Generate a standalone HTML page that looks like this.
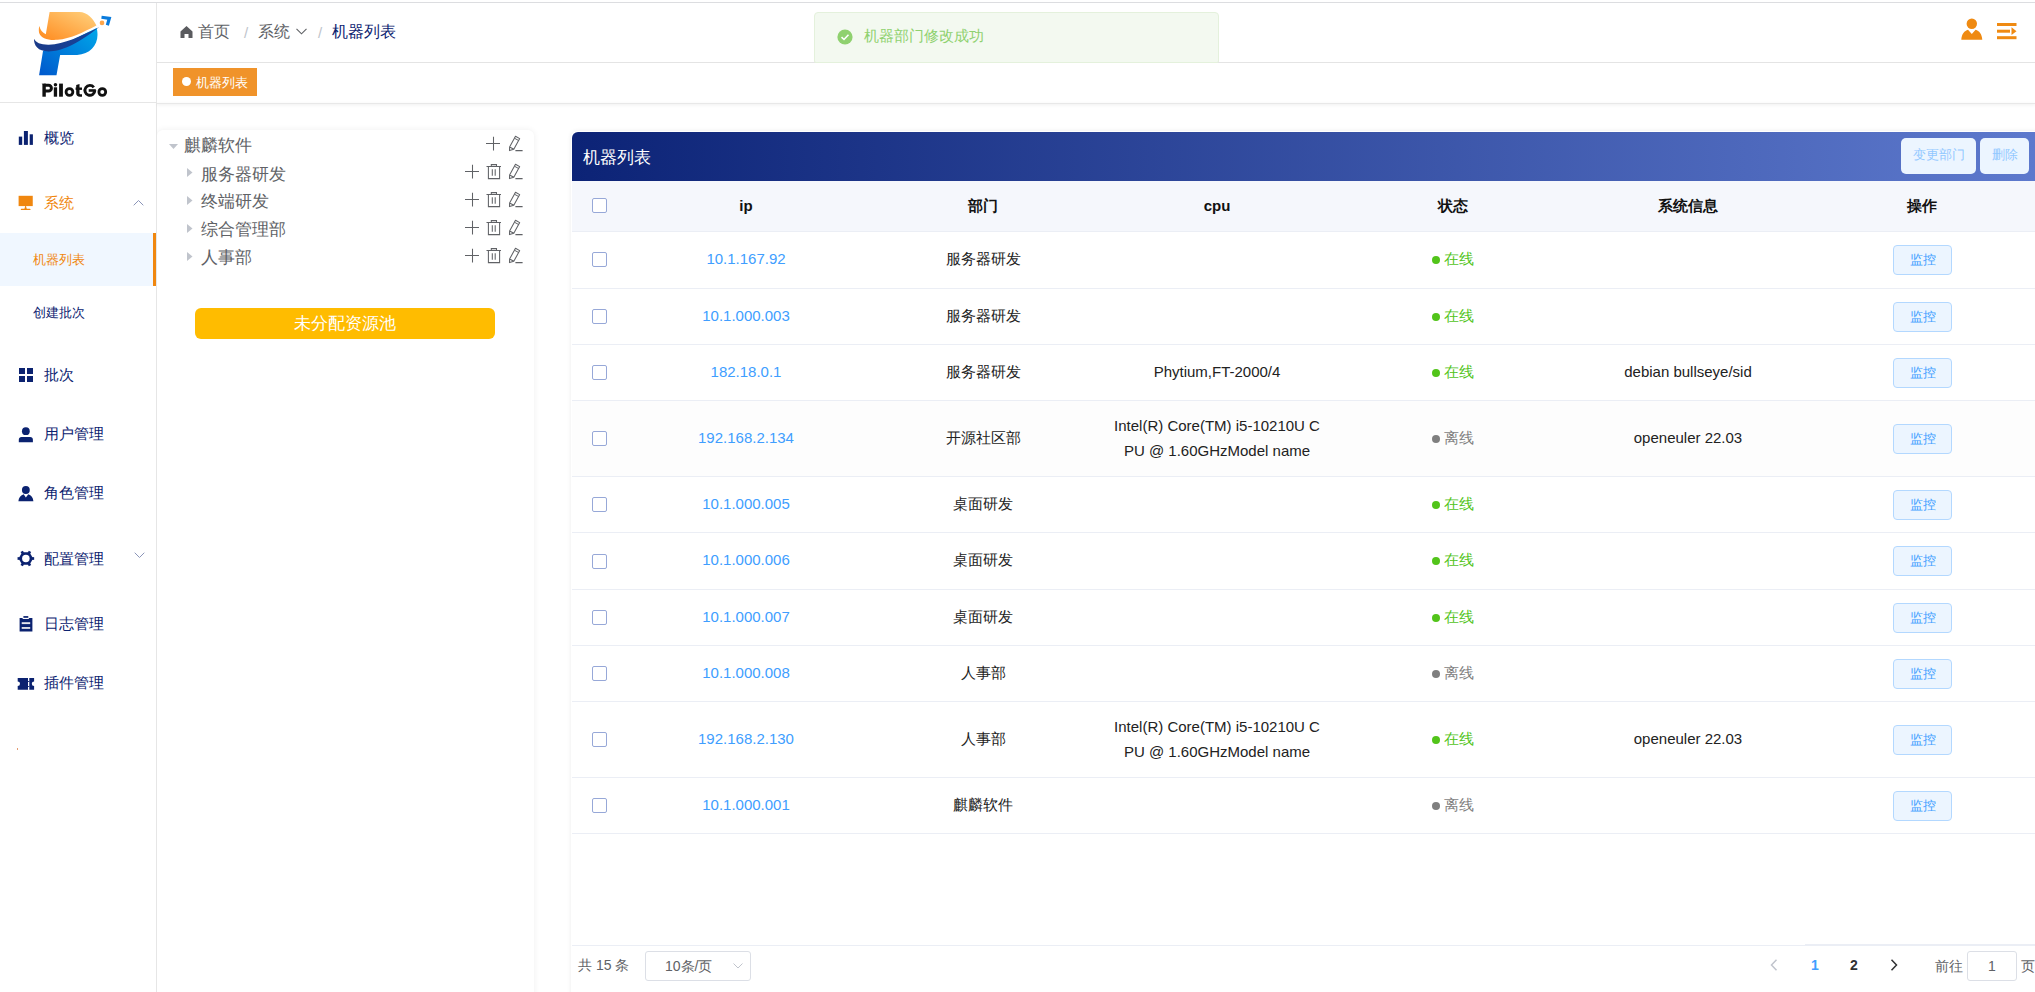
<!DOCTYPE html>
<html><head><meta charset="utf-8">
<style>
*{box-sizing:border-box;margin:0;padding:0}
html,body{width:2035px;height:992px;overflow:hidden;background:#fff;font-family:"Liberation Sans",sans-serif;position:relative}
.a{position:absolute;white-space:nowrap}
.nav{color:#0b2270;font-size:15px;line-height:15px}
.ic{position:absolute}
</style></head><body>
<!-- top line -->
<div class="a" style="left:0;top:2px;width:2035px;height:1px;background:#dcdde0"></div>
<!-- sidebar -->
<div class="a" style="left:156px;top:3px;width:1px;height:989px;background:#e6e6e6"></div>
<div class="a" style="left:0;top:102px;width:156px;height:1px;background:#e6e6e6"></div>

<svg class="a" style="left:30px;top:8px" width="85" height="72" viewBox="0 0 1171 992">
<defs>
<linearGradient id="og" x1="0" y1="1" x2="1" y2="0"><stop offset="0" stop-color="#ff8a1e"/><stop offset="1" stop-color="#ffd27f"/></linearGradient>
<linearGradient id="bg" x1="0" y1="1" x2="1" y2="0"><stop offset="0" stop-color="#0058cc"/><stop offset="1" stop-color="#00a8ea"/></linearGradient>
<linearGradient id="ng" x1="0" y1="0" x2="1" y2="0"><stop offset="0" stop-color="#1b3a88"/><stop offset="1" stop-color="#15459e"/></linearGradient>
</defs>
<path d="M270,55 L680,55 C790,55 870,150 915,240 C720,340 560,420 380,438 C250,448 150,420 125,340 C118,300 122,270 130,248 C140,300 170,340 218,362 Z" fill="url(#og)"/>
<path d="M180,590 L125,925 L365,925 L415,648 L650,648 C820,640 930,520 930,370 C930,330 925,300 918,275 L 500,480 Z" fill="url(#bg)"/>
<path d="M55,425 C52,520 110,600 260,598 C420,596 620,520 955,262 C700,390 470,500 260,506 C150,508 80,480 55,425 Z" fill="url(#ng)"/>
<circle cx="992" cy="205" r="32" fill="#ffa64a"/>
<path d="M985,128 L1093,142 L1066,238" fill="none" stroke="#0a7bdc" stroke-width="44" stroke-linejoin="miter"/>
</svg>
<svg class="a" style="left:0;top:0" width="156" height="102" viewBox="0 0 156 102">
<g fill="#111">
<rect x="42.4" y="83.8" width="3.4" height="12.9"/>
<path d="M41.5,83.8 H45.8 V86 Z"/>
</g>
<path d="M44,85.3 H48.55 A2.85,2.85 0 0 1 48.55,91 H44" fill="none" stroke="#111" stroke-width="3"/>
<circle cx="55.45" cy="84.7" r="1.75" fill="#111"/>
<rect x="53.8" y="87.3" width="3.3" height="9.4" fill="#111"/>
<rect x="59.1" y="83.6" width="3.8" height="13.1" fill="#111"/>
<circle cx="69.45" cy="92" r="3.4" fill="none" stroke="#111" stroke-width="2.8"/>
<path d="M76.2,85 L79.5,84 V93.2 C79.5,94 80,94.2 80.6,94.2 H82 V96.7 H80 C77.5,96.7 76.2,95.5 76.2,93.5 Z" fill="#111"/>
<rect x="75.6" y="87.5" width="6.4" height="2.4" fill="#111"/>
<path d="M93.80,87.30 A4.95,4.95 0 1 0 94.85,90.35" fill="none" stroke="#111" stroke-width="2.9"/>
<rect x="88.7" y="89.2" width="7.1" height="2.6" fill="#111"/>
<circle cx="102.3" cy="92" r="3.4" fill="none" stroke="#111" stroke-width="2.8"/>
</svg>
<!-- MENU -->

<!-- 概览 -->
<svg class="a" style="left:14px;top:126px" width="24" height="24" viewBox="14 126 24 24"><rect x="18.8" y="136.6" width="3.4" height="8.3" fill="#0b2270"/><rect x="23.9" y="131" width="4" height="13.9" fill="#0b2270"/><rect x="29.7" y="134.3" width="3.2" height="10.6" fill="#0b2270"/></svg>
<div class="a nav" style="left:44px;top:130px">概览</div>
<!-- 系统 -->
<svg class="a" style="left:14px;top:190px" width="24" height="24" viewBox="14 190 24 24"><rect x="18.6" y="195.8" width="14.15" height="10.3" fill="#f0870f"/><path d="M24.4,208.9 L25.2,206.1 H26 L26.8,208.9 Z" fill="#f0870f"/><rect x="20.8" y="208.75" width="9.7" height="1.3" rx="0.6" fill="#f0870f"/></svg>
<div class="a nav" style="left:44px;top:195px;color:#f0870f">系统</div>
<svg class="a" style="left:133px;top:199px" width="11" height="7" viewBox="0 0 11 7"><path d="M0.7,6.3 L5.5,1.5 L10.3,6.3" fill="none" stroke="#8a94b8" stroke-width="1"/></svg>
<div class="a" style="left:0;top:233px;width:156px;height:53px;background:#f0f7ff"></div>
<div class="a" style="left:153px;top:233px;width:3px;height:53px;background:#f0870f"></div>
<div class="a nav" style="left:33px;top:252.5px;font-size:13px;line-height:13px;color:#f0870f">机器列表</div>
<div class="a nav" style="left:33px;top:305.5px;font-size:13px;line-height:13px">创建批次</div>
<!-- 批次 -->
<svg class="a" style="left:19px;top:368px" width="14" height="14" viewBox="0 0 14 14"><rect x="0" y="0" width="6" height="6" fill="#0b2270"/><rect x="8" y="0" width="6" height="6" fill="#0b2270"/><rect x="0" y="8" width="6" height="6" fill="#0b2270"/><rect x="8" y="8" width="6" height="6" fill="#0b2270"/></svg>
<div class="a nav" style="left:44px;top:367px">批次</div>
<!-- 用户管理 -->
<svg class="a" style="left:14px;top:422px" width="24" height="24" viewBox="14 422 24 24"><circle cx="25.85" cy="431.2" r="3.9" fill="#0b2270"/><path d="M18.8,442.3 V439.8 C18.8,438.2 19.9,437.1 21.5,437.1 H30.2 C31.8,437.1 32.9,438.2 32.9,439.8 V442.3 Z" fill="#0b2270"/></svg>
<div class="a nav" style="left:44px;top:426px">用户管理</div>
<!-- 角色管理 -->
<svg class="a" style="left:14px;top:481px" width="24" height="24" viewBox="14 481 24 24"><circle cx="25.85" cy="490" r="3.9" fill="#0b2270"/><path d="M18.4,501.3 C18.6,497.5 20.8,495 23.7,494.2 L25.85,497.5 L28.3,494.2 C31.2,495 33.2,497.5 33.4,501.3 Z" fill="#0b2270"/></svg>
<div class="a nav" style="left:44px;top:485px">角色管理</div>
<!-- 配置管理 -->
<svg class="a" style="left:14px;top:546px" width="24" height="24" viewBox="0 0 24 24"><g transform="translate(11.85,12.5)" fill="#0b2270"><path d="M7.3,0 L3.65,6.32 L-3.65,6.32 L-7.3,0 L-3.65,-6.32 L3.65,-6.32 Z"/><rect x="6.2" y="-1.35" width="2.1" height="2.7" transform="rotate(0)"/><rect x="6.2" y="-1.35" width="2.1" height="2.7" transform="rotate(60)"/><rect x="6.2" y="-1.35" width="2.1" height="2.7" transform="rotate(120)"/><rect x="6.2" y="-1.35" width="2.1" height="2.7" transform="rotate(180)"/><rect x="6.2" y="-1.35" width="2.1" height="2.7" transform="rotate(240)"/><rect x="6.2" y="-1.35" width="2.1" height="2.7" transform="rotate(300)"/><circle r="3.75" fill="#fff"/></g></svg>
<div class="a nav" style="left:44px;top:550.5px">配置管理</div>
<svg class="a" style="left:134px;top:552px" width="11" height="7" viewBox="0 0 11 7"><path d="M0.7,0.7 L5.5,5.5 L10.3,0.7" fill="none" stroke="#8a94b8" stroke-width="1"/></svg>
<!-- 日志管理 -->
<svg class="a" style="left:19px;top:616px" width="14" height="16" viewBox="19 616 14 16"><rect x="23.4" y="616.1" width="4.9" height="1.7" fill="#0b2270"/><path d="M19.6,618 H22.3 L23,619 H28.5 L29.3,618 H32.4 V631.4 H19.6 Z" fill="#0b2270"/><rect x="21.7" y="622.2" width="8.5" height="1.9" fill="#e6e7ee"/><rect x="21.7" y="627" width="8.5" height="1.9" fill="#dcdde6"/></svg>
<div class="a nav" style="left:44px;top:615.5px">日志管理</div>
<!-- 插件管理 -->
<svg class="a" style="left:17px;top:677px" width="18" height="14" viewBox="17 677 18 14"><path d="M17.7,678 H28 V689.7 H17.7 V686.1 A2.3,2.3 0 0 0 17.7,681.5 Z M29.3,678 H34.1 V681.5 A2.3,2.3 0 0 0 34.1,686.1 V689.7 H29.3 Z" fill="#0b2270"/><rect x="28" y="681.1" width="1.3" height="0.9" fill="#0b2270"/><rect x="28" y="686.1" width="1.3" height="0.9" fill="#0b2270"/></svg>
<div class="a nav" style="left:44px;top:675px">插件管理</div>
<div class="a" style="left:17px;top:748px;width:1px;height:2px;background:#e39a70"></div>


<!-- HEADER -->
<div class="a" style="left:157px;top:62px;width:1878px;height:1px;background:#e4e4e4"></div>

<svg class="a" style="left:180px;top:26px" width="13" height="12" viewBox="0 0 13 12"><path d="M6.5,0 L12.5,5.5 L12.5,12 L8.5,12 L8.5,8 L4.5,8 L4.5,12 L0.5,12 L0.5,5.5 Z" fill="#5a5b5f"/></svg>
<div class="a" style="left:198px;top:24px;font-size:16px;line-height:16px;color:#606266">首页</div>
<div class="a" style="left:244px;top:25px;font-size:15px;line-height:15px;color:#c0c4cc">/</div>
<div class="a" style="left:258px;top:24px;font-size:16px;line-height:16px;color:#606266">系统</div>
<svg class="a" style="left:296px;top:28px" width="11" height="7" viewBox="0 0 11 7"><path d="M0.5,0.8 L5.5,5.8 L10.5,0.8" fill="none" stroke="#606266" stroke-width="1.1"/></svg>
<div class="a" style="left:318px;top:25px;font-size:15px;line-height:15px;color:#c0c4cc">/</div>
<div class="a" style="left:332px;top:24px;font-size:16px;line-height:16px;color:#0b2270">机器列表</div>
<svg class="a" style="left:1961px;top:18px" width="22" height="22" viewBox="0 0 22 22"><circle cx="10.8" cy="5.7" r="5.2" fill="#ef8a12"/><path d="M0.3,21.8 C0.6,16 3.5,12.8 7,11.8 L10.8,16 L14.6,11.8 C18.1,12.8 21,16 21.3,21.8 Z" fill="#ef8a12"/></svg>
<svg class="a" style="left:1997px;top:23px" width="20" height="17" viewBox="0 0 20 17"><rect x="0" y="0" width="19.5" height="3" fill="#ef8a12"/><rect x="0" y="6.7" width="13" height="3" fill="#ef8a12"/><path d="M14.5,4.3 L19.5,8.2 L14.5,12 Z" fill="#ef8a12"/><rect x="0" y="13.2" width="19.5" height="3" fill="#ef8a12"/></svg>
<!-- TAGS -->
<div class="a" style="left:157px;top:103px;width:1878px;height:1px;background:#e8e8e8;box-shadow:0 1px 3px rgba(0,0,0,.12)"></div>
<div class="a" style="left:173px;top:68px;width:84px;height:28px;background:#f0932a"></div>
<div class="a" style="left:182px;top:77px;width:9px;height:9px;border-radius:50%;background:#fff"></div>
<div class="a" style="left:196px;top:75.5px;font-size:13px;line-height:13px;color:#fff">机器列表</div>


<!-- TREE -->
<div class="a" style="left:157px;top:130px;width:377px;height:880px;background:#fff;border-radius:6px;box-shadow:0 0 6px rgba(0,0,0,.07);clip-path:inset(-10px -10px -10px 0)"></div>
<svg class="a" style="left:169px;top:144px" width="9" height="6" viewBox="0 0 9 6"><path d="M0,0 L9,0 L4.5,5 Z" fill="#c0c4cc"/></svg>
<div class="a" style="left:184px;top:137px;font-size:17px;line-height:17px;color:#606266">麒麟软件</div>
<svg class="a" style="left:486px;top:136.0px" width="15" height="15" viewBox="0 0 15 15"><path d="M7.5,0.8 V14.6 M0,7.5 H14" stroke="#606266" stroke-width="1.05" fill="none"/></svg>
<svg class="a" style="left:508px;top:135.0px" width="16" height="17" viewBox="0 0 16 17"><path d="M1.5,15.6 L1.6,12 L7.5,1.3 L11.7,3.6 L5.8,14.2 Z M7,2.2 L6.3,3.3 M1.6,12 L5.8,14.2 M7.4,15.6 H14.6" stroke="#606266" stroke-width="1.05" fill="none" stroke-linejoin="round"/><path d="M6.4,3.2 L10.6,5.5" stroke="#606266" stroke-width="1"/></svg>
<svg class="a" style="left:187px;top:167.5px" width="6" height="9" viewBox="0 0 6 9"><path d="M0,0 L5.5,4.5 L0,9 Z" fill="#c0c4cc"/></svg>
<div class="a" style="left:201px;top:165.5px;font-size:17px;line-height:17px;color:#606266">服务器研发</div>
<svg class="a" style="left:465px;top:164.0px" width="15" height="15" viewBox="0 0 15 15"><path d="M7.5,0.8 V14.6 M0,7.5 H14" stroke="#606266" stroke-width="1.05" fill="none"/></svg>
<svg class="a" style="left:486px;top:164.0px" width="16" height="16" viewBox="0 0 16 16"><path d="M0.5,2.4 H15 M5.3,2.4 V0.6 H10.5 V2.4 M2.4,2.4 V14.6 H13.6 V2.4 M6.3,5.3 V11.8 M9.2,5.3 V11.8" stroke="#606266" stroke-width="1.05" fill="none"/></svg>
<svg class="a" style="left:508px;top:163.0px" width="16" height="17" viewBox="0 0 16 17"><path d="M1.5,15.6 L1.6,12 L7.5,1.3 L11.7,3.6 L5.8,14.2 Z M7,2.2 L6.3,3.3 M1.6,12 L5.8,14.2 M7.4,15.6 H14.6" stroke="#606266" stroke-width="1.05" fill="none" stroke-linejoin="round"/><path d="M6.4,3.2 L10.6,5.5" stroke="#606266" stroke-width="1"/></svg>
<svg class="a" style="left:187px;top:195.5px" width="6" height="9" viewBox="0 0 6 9"><path d="M0,0 L5.5,4.5 L0,9 Z" fill="#c0c4cc"/></svg>
<div class="a" style="left:201px;top:192.5px;font-size:17px;line-height:17px;color:#606266">终端研发</div>
<svg class="a" style="left:465px;top:192.0px" width="15" height="15" viewBox="0 0 15 15"><path d="M7.5,0.8 V14.6 M0,7.5 H14" stroke="#606266" stroke-width="1.05" fill="none"/></svg>
<svg class="a" style="left:486px;top:192.0px" width="16" height="16" viewBox="0 0 16 16"><path d="M0.5,2.4 H15 M5.3,2.4 V0.6 H10.5 V2.4 M2.4,2.4 V14.6 H13.6 V2.4 M6.3,5.3 V11.8 M9.2,5.3 V11.8" stroke="#606266" stroke-width="1.05" fill="none"/></svg>
<svg class="a" style="left:508px;top:191.0px" width="16" height="17" viewBox="0 0 16 17"><path d="M1.5,15.6 L1.6,12 L7.5,1.3 L11.7,3.6 L5.8,14.2 Z M7,2.2 L6.3,3.3 M1.6,12 L5.8,14.2 M7.4,15.6 H14.6" stroke="#606266" stroke-width="1.05" fill="none" stroke-linejoin="round"/><path d="M6.4,3.2 L10.6,5.5" stroke="#606266" stroke-width="1"/></svg>
<svg class="a" style="left:187px;top:223.5px" width="6" height="9" viewBox="0 0 6 9"><path d="M0,0 L5.5,4.5 L0,9 Z" fill="#c0c4cc"/></svg>
<div class="a" style="left:201px;top:220.5px;font-size:17px;line-height:17px;color:#606266">综合管理部</div>
<svg class="a" style="left:465px;top:220.0px" width="15" height="15" viewBox="0 0 15 15"><path d="M7.5,0.8 V14.6 M0,7.5 H14" stroke="#606266" stroke-width="1.05" fill="none"/></svg>
<svg class="a" style="left:486px;top:220.0px" width="16" height="16" viewBox="0 0 16 16"><path d="M0.5,2.4 H15 M5.3,2.4 V0.6 H10.5 V2.4 M2.4,2.4 V14.6 H13.6 V2.4 M6.3,5.3 V11.8 M9.2,5.3 V11.8" stroke="#606266" stroke-width="1.05" fill="none"/></svg>
<svg class="a" style="left:508px;top:219.0px" width="16" height="17" viewBox="0 0 16 17"><path d="M1.5,15.6 L1.6,12 L7.5,1.3 L11.7,3.6 L5.8,14.2 Z M7,2.2 L6.3,3.3 M1.6,12 L5.8,14.2 M7.4,15.6 H14.6" stroke="#606266" stroke-width="1.05" fill="none" stroke-linejoin="round"/><path d="M6.4,3.2 L10.6,5.5" stroke="#606266" stroke-width="1"/></svg>
<svg class="a" style="left:187px;top:251.5px" width="6" height="9" viewBox="0 0 6 9"><path d="M0,0 L5.5,4.5 L0,9 Z" fill="#c0c4cc"/></svg>
<div class="a" style="left:201px;top:249px;font-size:17px;line-height:17px;color:#606266">人事部</div>
<svg class="a" style="left:465px;top:248.0px" width="15" height="15" viewBox="0 0 15 15"><path d="M7.5,0.8 V14.6 M0,7.5 H14" stroke="#606266" stroke-width="1.05" fill="none"/></svg>
<svg class="a" style="left:486px;top:248.0px" width="16" height="16" viewBox="0 0 16 16"><path d="M0.5,2.4 H15 M5.3,2.4 V0.6 H10.5 V2.4 M2.4,2.4 V14.6 H13.6 V2.4 M6.3,5.3 V11.8 M9.2,5.3 V11.8" stroke="#606266" stroke-width="1.05" fill="none"/></svg>
<svg class="a" style="left:508px;top:247.0px" width="16" height="17" viewBox="0 0 16 17"><path d="M1.5,15.6 L1.6,12 L7.5,1.3 L11.7,3.6 L5.8,14.2 Z M7,2.2 L6.3,3.3 M1.6,12 L5.8,14.2 M7.4,15.6 H14.6" stroke="#606266" stroke-width="1.05" fill="none" stroke-linejoin="round"/><path d="M6.4,3.2 L10.6,5.5" stroke="#606266" stroke-width="1"/></svg>
<div class="a" style="left:195px;top:308px;width:300px;height:31px;border-radius:6px;background:#ffbc00"></div>
<div class="a" style="left:195px;top:308px;width:300px;height:31px;text-align:center;font-size:17px;line-height:31px;color:#fff">未分配资源池</div>
<!-- TABLE -->
<div class="a" style="left:571px;top:131px;width:1470px;height:870px;background:#fff;border-radius:6px;box-shadow:0 0 4px rgba(0,0,0,.08)"></div>
<div class="a" style="left:572px;top:132px;width:1463px;height:49px;border-radius:6px 0 0 0;background:linear-gradient(to right,#0c2376,#5d79cd)"></div>
<div class="a" style="left:583px;top:149px;font-size:17px;line-height:17px;color:#fff">机器列表</div>
<div class="a" style="left:1901px;top:138px;width:75px;height:36px;border-radius:5px;background:#ecf5ff;color:#92c8ff;font-size:13px;line-height:34px;text-align:center">变更部门</div>
<div class="a" style="left:1980px;top:138px;width:49px;height:36px;border-radius:5px;background:#ecf5ff;color:#92c8ff;font-size:13px;line-height:34px;text-align:center">删除</div>
<div class="a" style="left:572px;top:181px;width:1463px;height:50px;background:#f5f7fc"></div>
<div class="a" style="left:592px;top:198px;width:15px;height:15px;border:1px solid #97a8d8;border-radius:2px;background:#fff"></div>
<div class="a" style="left:646px;top:197px;width:200px;text-align:center;font-size:15px;line-height:17px;font-weight:bold;color:#111">ip</div>
<div class="a" style="left:883px;top:197px;width:200px;text-align:center;font-size:15px;line-height:17px;font-weight:bold;color:#111">部门</div>
<div class="a" style="left:1117px;top:197px;width:200px;text-align:center;font-size:15px;line-height:17px;font-weight:bold;color:#111">cpu</div>
<div class="a" style="left:1353px;top:197px;width:200px;text-align:center;font-size:15px;line-height:17px;font-weight:bold;color:#111">状态</div>
<div class="a" style="left:1588px;top:197px;width:200px;text-align:center;font-size:15px;line-height:17px;font-weight:bold;color:#111">系统信息</div>
<div class="a" style="left:1822px;top:197px;width:200px;text-align:center;font-size:15px;line-height:17px;font-weight:bold;color:#111">操作</div>
<div class="a" style="left:572px;top:401px;width:1463px;height:75px;background:#fdfdfd"></div>
<div class="a" style="left:572px;top:231px;width:1463px;height:1px;background:#ebeef5"></div>
<div class="a" style="left:572px;top:288px;width:1463px;height:1px;background:#ebeef5"></div>
<div class="a" style="left:572px;top:344px;width:1463px;height:1px;background:#ebeef5"></div>
<div class="a" style="left:572px;top:400px;width:1463px;height:1px;background:#ebeef5"></div>
<div class="a" style="left:572px;top:476px;width:1463px;height:1px;background:#ebeef5"></div>
<div class="a" style="left:572px;top:532px;width:1463px;height:1px;background:#ebeef5"></div>
<div class="a" style="left:572px;top:589px;width:1463px;height:1px;background:#ebeef5"></div>
<div class="a" style="left:572px;top:645px;width:1463px;height:1px;background:#ebeef5"></div>
<div class="a" style="left:572px;top:701px;width:1463px;height:1px;background:#ebeef5"></div>
<div class="a" style="left:572px;top:777px;width:1463px;height:1px;background:#ebeef5"></div>
<div class="a" style="left:572px;top:833px;width:1463px;height:1px;background:#ebeef5"></div>
<div class="a" style="left:592px;top:252px;width:15px;height:15px;border:1px solid #97a8d8;border-radius:2px;background:#fff"></div>
<div class="a" style="left:636px;top:250.0px;width:220px;text-align:center;font-size:15px;line-height:17px;color:#409eff">10.1.167.92</div>
<div class="a" style="left:873px;top:250.0px;width:220px;text-align:center;font-size:15px;line-height:17px;color:#222">服务器研发</div>
<div class="a" style="left:1432px;top:256.0px;width:8px;height:8px;border-radius:50%;background:#52c41a"></div>
<div class="a" style="left:1444px;top:250.0px;font-size:15px;line-height:17px;color:#52c41a">在线</div>
<div class="a" style="left:1893px;top:245.0px;width:59px;height:30px;border:1px solid #b3d8ff;border-radius:4px;background:#ecf5ff;color:#409eff;font-size:13px;line-height:27px;text-align:center">监控</div>
<div class="a" style="left:592px;top:309px;width:15px;height:15px;border:1px solid #97a8d8;border-radius:2px;background:#fff"></div>
<div class="a" style="left:636px;top:306.5px;width:220px;text-align:center;font-size:15px;line-height:17px;color:#409eff">10.1.000.003</div>
<div class="a" style="left:873px;top:306.5px;width:220px;text-align:center;font-size:15px;line-height:17px;color:#222">服务器研发</div>
<div class="a" style="left:1432px;top:312.5px;width:8px;height:8px;border-radius:50%;background:#52c41a"></div>
<div class="a" style="left:1444px;top:306.5px;font-size:15px;line-height:17px;color:#52c41a">在线</div>
<div class="a" style="left:1893px;top:301.5px;width:59px;height:30px;border:1px solid #b3d8ff;border-radius:4px;background:#ecf5ff;color:#409eff;font-size:13px;line-height:27px;text-align:center">监控</div>
<div class="a" style="left:592px;top:365px;width:15px;height:15px;border:1px solid #97a8d8;border-radius:2px;background:#fff"></div>
<div class="a" style="left:636px;top:362.5px;width:220px;text-align:center;font-size:15px;line-height:17px;color:#409eff">182.18.0.1</div>
<div class="a" style="left:873px;top:362.5px;width:220px;text-align:center;font-size:15px;line-height:17px;color:#222">服务器研发</div>
<div class="a" style="left:1102px;top:359.0px;width:230px;text-align:center;font-size:15px;line-height:25px;color:#222;white-space:normal">Phytium,FT-2000/4</div>
<div class="a" style="left:1432px;top:368.5px;width:8px;height:8px;border-radius:50%;background:#52c41a"></div>
<div class="a" style="left:1444px;top:362.5px;font-size:15px;line-height:17px;color:#52c41a">在线</div>
<div class="a" style="left:1578px;top:362.5px;width:220px;text-align:center;font-size:15px;line-height:17px;color:#222">debian bullseye/sid</div>
<div class="a" style="left:1893px;top:357.5px;width:59px;height:30px;border:1px solid #b3d8ff;border-radius:4px;background:#ecf5ff;color:#409eff;font-size:13px;line-height:27px;text-align:center">监控</div>
<div class="a" style="left:592px;top:431px;width:15px;height:15px;border:1px solid #97a8d8;border-radius:2px;background:#fff"></div>
<div class="a" style="left:636px;top:428.5px;width:220px;text-align:center;font-size:15px;line-height:17px;color:#409eff">192.168.2.134</div>
<div class="a" style="left:873px;top:428.5px;width:220px;text-align:center;font-size:15px;line-height:17px;color:#222">开源社区部</div>
<div class="a" style="left:1102px;top:412.5px;width:230px;text-align:center;font-size:15px;line-height:25px;color:#222;white-space:normal">Intel(R) Core(TM) i5-10210U C<br>PU @ 1.60GHzModel name</div>
<div class="a" style="left:1432px;top:434.5px;width:8px;height:8px;border-radius:50%;background:#7f7f7f"></div>
<div class="a" style="left:1444px;top:428.5px;font-size:15px;line-height:17px;color:#7f7f7f">离线</div>
<div class="a" style="left:1578px;top:428.5px;width:220px;text-align:center;font-size:15px;line-height:17px;color:#222">openeuler 22.03</div>
<div class="a" style="left:1893px;top:423.5px;width:59px;height:30px;border:1px solid #b3d8ff;border-radius:4px;background:#ecf5ff;color:#409eff;font-size:13px;line-height:27px;text-align:center">监控</div>
<div class="a" style="left:592px;top:497px;width:15px;height:15px;border:1px solid #97a8d8;border-radius:2px;background:#fff"></div>
<div class="a" style="left:636px;top:494.5px;width:220px;text-align:center;font-size:15px;line-height:17px;color:#409eff">10.1.000.005</div>
<div class="a" style="left:873px;top:494.5px;width:220px;text-align:center;font-size:15px;line-height:17px;color:#222">桌面研发</div>
<div class="a" style="left:1432px;top:500.5px;width:8px;height:8px;border-radius:50%;background:#52c41a"></div>
<div class="a" style="left:1444px;top:494.5px;font-size:15px;line-height:17px;color:#52c41a">在线</div>
<div class="a" style="left:1893px;top:489.5px;width:59px;height:30px;border:1px solid #b3d8ff;border-radius:4px;background:#ecf5ff;color:#409eff;font-size:13px;line-height:27px;text-align:center">监控</div>
<div class="a" style="left:592px;top:554px;width:15px;height:15px;border:1px solid #97a8d8;border-radius:2px;background:#fff"></div>
<div class="a" style="left:636px;top:551.0px;width:220px;text-align:center;font-size:15px;line-height:17px;color:#409eff">10.1.000.006</div>
<div class="a" style="left:873px;top:551.0px;width:220px;text-align:center;font-size:15px;line-height:17px;color:#222">桌面研发</div>
<div class="a" style="left:1432px;top:557.0px;width:8px;height:8px;border-radius:50%;background:#52c41a"></div>
<div class="a" style="left:1444px;top:551.0px;font-size:15px;line-height:17px;color:#52c41a">在线</div>
<div class="a" style="left:1893px;top:546.0px;width:59px;height:30px;border:1px solid #b3d8ff;border-radius:4px;background:#ecf5ff;color:#409eff;font-size:13px;line-height:27px;text-align:center">监控</div>
<div class="a" style="left:592px;top:610px;width:15px;height:15px;border:1px solid #97a8d8;border-radius:2px;background:#fff"></div>
<div class="a" style="left:636px;top:607.5px;width:220px;text-align:center;font-size:15px;line-height:17px;color:#409eff">10.1.000.007</div>
<div class="a" style="left:873px;top:607.5px;width:220px;text-align:center;font-size:15px;line-height:17px;color:#222">桌面研发</div>
<div class="a" style="left:1432px;top:613.5px;width:8px;height:8px;border-radius:50%;background:#52c41a"></div>
<div class="a" style="left:1444px;top:607.5px;font-size:15px;line-height:17px;color:#52c41a">在线</div>
<div class="a" style="left:1893px;top:602.5px;width:59px;height:30px;border:1px solid #b3d8ff;border-radius:4px;background:#ecf5ff;color:#409eff;font-size:13px;line-height:27px;text-align:center">监控</div>
<div class="a" style="left:592px;top:666px;width:15px;height:15px;border:1px solid #97a8d8;border-radius:2px;background:#fff"></div>
<div class="a" style="left:636px;top:663.5px;width:220px;text-align:center;font-size:15px;line-height:17px;color:#409eff">10.1.000.008</div>
<div class="a" style="left:873px;top:663.5px;width:220px;text-align:center;font-size:15px;line-height:17px;color:#222">人事部</div>
<div class="a" style="left:1432px;top:669.5px;width:8px;height:8px;border-radius:50%;background:#7f7f7f"></div>
<div class="a" style="left:1444px;top:663.5px;font-size:15px;line-height:17px;color:#7f7f7f">离线</div>
<div class="a" style="left:1893px;top:658.5px;width:59px;height:30px;border:1px solid #b3d8ff;border-radius:4px;background:#ecf5ff;color:#409eff;font-size:13px;line-height:27px;text-align:center">监控</div>
<div class="a" style="left:592px;top:732px;width:15px;height:15px;border:1px solid #97a8d8;border-radius:2px;background:#fff"></div>
<div class="a" style="left:636px;top:729.5px;width:220px;text-align:center;font-size:15px;line-height:17px;color:#409eff">192.168.2.130</div>
<div class="a" style="left:873px;top:729.5px;width:220px;text-align:center;font-size:15px;line-height:17px;color:#222">人事部</div>
<div class="a" style="left:1102px;top:713.5px;width:230px;text-align:center;font-size:15px;line-height:25px;color:#222;white-space:normal">Intel(R) Core(TM) i5-10210U C<br>PU @ 1.60GHzModel name</div>
<div class="a" style="left:1432px;top:735.5px;width:8px;height:8px;border-radius:50%;background:#52c41a"></div>
<div class="a" style="left:1444px;top:729.5px;font-size:15px;line-height:17px;color:#52c41a">在线</div>
<div class="a" style="left:1578px;top:729.5px;width:220px;text-align:center;font-size:15px;line-height:17px;color:#222">openeuler 22.03</div>
<div class="a" style="left:1893px;top:724.5px;width:59px;height:30px;border:1px solid #b3d8ff;border-radius:4px;background:#ecf5ff;color:#409eff;font-size:13px;line-height:27px;text-align:center">监控</div>
<div class="a" style="left:592px;top:798px;width:15px;height:15px;border:1px solid #97a8d8;border-radius:2px;background:#fff"></div>
<div class="a" style="left:636px;top:795.5px;width:220px;text-align:center;font-size:15px;line-height:17px;color:#409eff">10.1.000.001</div>
<div class="a" style="left:873px;top:795.5px;width:220px;text-align:center;font-size:15px;line-height:17px;color:#222">麒麟软件</div>
<div class="a" style="left:1432px;top:801.5px;width:8px;height:8px;border-radius:50%;background:#7f7f7f"></div>
<div class="a" style="left:1444px;top:795.5px;font-size:15px;line-height:17px;color:#7f7f7f">离线</div>
<div class="a" style="left:1893px;top:790.5px;width:59px;height:30px;border:1px solid #b3d8ff;border-radius:4px;background:#ecf5ff;color:#409eff;font-size:13px;line-height:27px;text-align:center">监控</div>
<div class="a" style="left:572px;top:945px;width:1463px;height:1px;background:#ebeef5"></div>
<div class="a" style="left:1805px;top:944px;width:230px;height:1px;background:#ebeef5"></div>
<div class="a" style="left:578px;top:957px;font-size:14px;line-height:16px;color:#606266">共 15 条</div>
<div class="a" style="left:645px;top:951px;width:106px;height:30px;border:1px solid #dcdfe6;border-radius:3px;background:#fff"></div>
<div class="a" style="left:665px;top:958px;font-size:14px;line-height:16px;color:#606266">10条/页</div>
<svg class="a" style="left:733px;top:963px" width="10" height="6" viewBox="0 0 10 6"><path d="M0.5,0.5 L5,5 L9.5,0.5" fill="none" stroke="#c0c4cc" stroke-width="1"/></svg>
<svg class="a" style="left:1770px;top:959px" width="8" height="12" viewBox="0 0 8 12"><path d="M6.5,0.8 L1.5,6 L6.5,11.2" fill="none" stroke="#c0c4cc" stroke-width="1.5"/></svg>
<div class="a" style="left:1811px;top:957px;font-size:14px;line-height:16px;color:#409eff;font-weight:bold">1</div>
<div class="a" style="left:1850px;top:957px;font-size:14px;line-height:16px;color:#303133;font-weight:bold">2</div>
<svg class="a" style="left:1890px;top:959px" width="8" height="12" viewBox="0 0 8 12"><path d="M1.5,0.8 L6.5,6 L1.5,11.2" fill="none" stroke="#303133" stroke-width="1.5"/></svg>
<div class="a" style="left:1935px;top:958px;font-size:14px;line-height:16px;color:#606266">前往</div>
<div class="a" style="left:1967px;top:951px;width:50px;height:30px;border:1px solid #dcdfe6;border-radius:3px;background:#fff;text-align:center;font-size:14px;line-height:28px;color:#606266">1</div>
<div class="a" style="left:2021px;top:958px;font-size:14px;line-height:16px;color:#606266">页</div>
<div class="a" style="left:814px;top:12px;width:405px;height:51px;border:1px solid #e4f1dc;border-radius:4px 4px 2px 2px;background:#f3f9f0"></div>
<svg class="a" style="left:837px;top:29px" width="16" height="16" viewBox="0 0 16 16"><circle cx="8" cy="8" r="7.6" fill="#8fd16f"/><path d="M4.5,8.2 L7,10.5 L11.5,5.8" fill="none" stroke="#fff" stroke-width="1.6"/></svg>
<div class="a" style="left:864px;top:28px;font-size:15px;line-height:16px;color:#8fd16f">机器部门修改成功</div>
</body></html>
